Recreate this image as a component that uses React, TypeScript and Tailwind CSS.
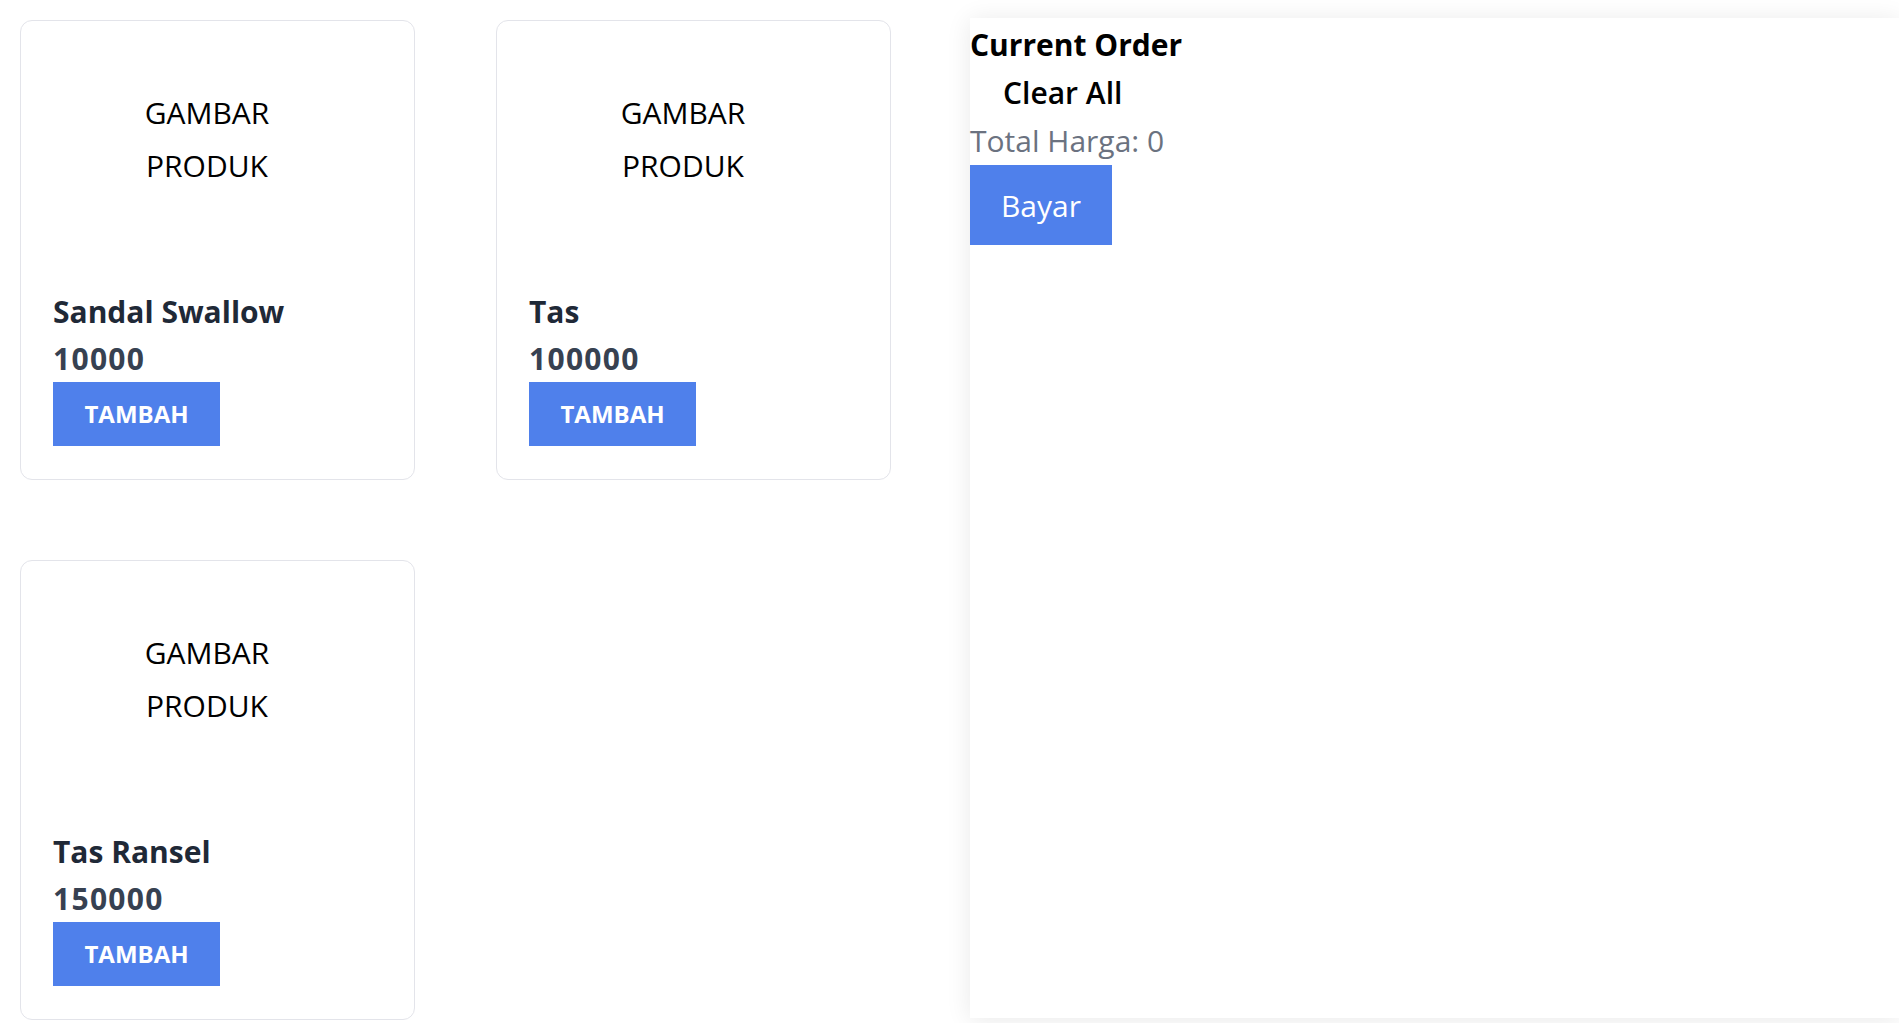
import React from "react";

const products = [
  { name: "Sandal Swallow", price: "10000" },
  { name: "Tas", price: "100000" },
  { name: "Tas Ransel", price: "150000" },
];

function Card({ name, price }: { name: string; price: string }) {
  return (
    <div className="w-[395px] h-[460px] border-[1.5px] border-[#e3e4ea] rounded-xl p-8 flex flex-col bg-white">
      <div className="w-[308px] h-[239px] pt-[33px] text-center text-[30px] leading-[53px] text-black">
        <div>GAMBAR</div>
        <div>PRODUK</div>
      </div>
      <div className="text-[30px] leading-[40px] font-bold text-[#1f2937] mb-[7px]">{name}</div>
      <div className="text-[30px] leading-[40px] font-bold text-[#374151] tracking-[1.3px]">{price}</div>
      <button className="mt-[3px] w-[167px] h-[64px] bg-[#4f80eb] text-white font-bold text-[24px] uppercase">
        Tambah
      </button>
    </div>
  );
}

export default function App() {
  return (
    <div
      className="flex min-h-screen bg-white"
      style={{ fontFamily: '"Open Sans", "Noto Sans", sans-serif' }}
    >
      <div className="w-[970px] shrink-0 pl-5 pt-5">
        <div className="grid grid-cols-[395px_395px] gap-x-[81px] gap-y-[80px]">
          {products.map((p) => (
            <Card key={p.name} name={p.name} price={p.price} />
          ))}
        </div>
      </div>
      <aside className="mt-[18px] h-[1000px] flex-1 bg-white pt-[3px] shadow-[0_2px_24px_rgba(0,0,0,0.09)]">
        <div className="text-[30px] leading-[48px] font-bold text-black">Current Order</div>
        <button className="block pl-[33px] text-[30px] leading-[48px] text-black font-semibold">Clear All</button>
        <div className="text-[30px] leading-[48px] text-[#6b7280]">Total Harga: 0</div>
        <button className="w-[142px] h-[80px] bg-[#4f80eb] text-white text-[30px]">Bayar</button>
      </aside>
    </div>
  );
}
